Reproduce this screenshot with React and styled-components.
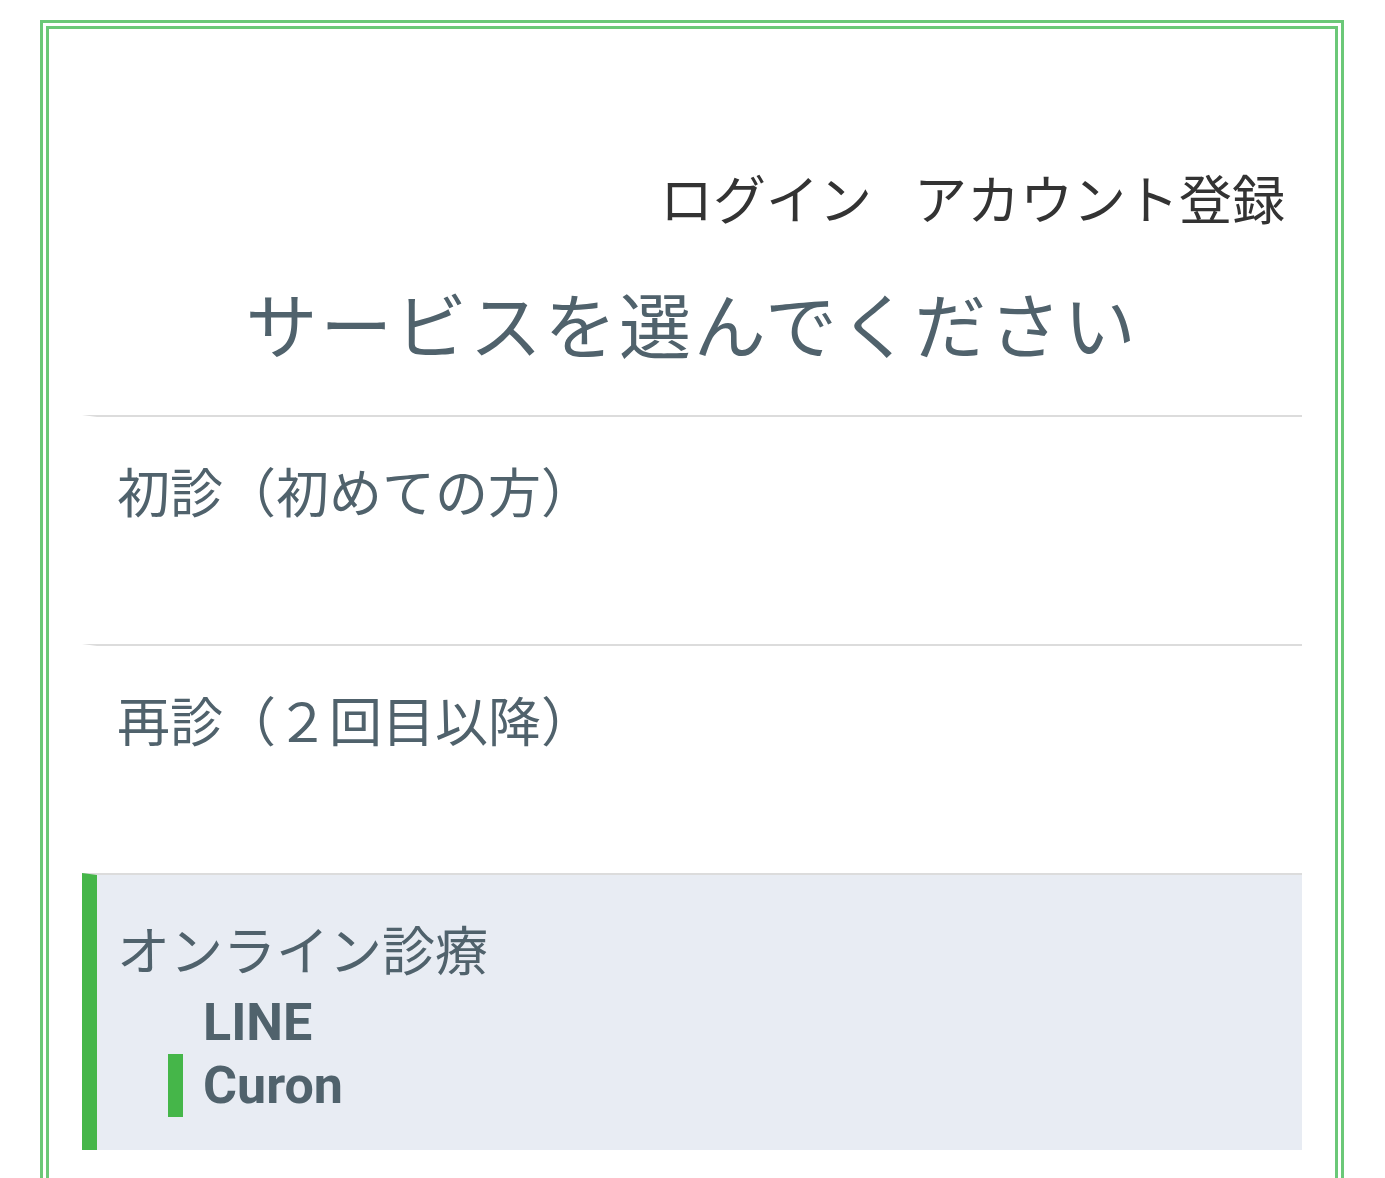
import React from 'react';
import styled, { createGlobalStyle } from 'styled-components';

const GlobalStyle = createGlobalStyle`
  body {
    margin: 0;
    background: #fff;
    font-family: "Noto Sans CJK JP", "Noto Sans", sans-serif;
  }
`;

const Frame = styled.div`
  margin: 20px 41px 0 40px;
  border: 9px double #6bc878;
  padding: 33px 33px 60px;
  min-height: 1200px;
`;

const Nav = styled.nav`
  display: flex;
  justify-content: flex-end;
  gap: 42px;
  padding: 96px 17px 0 0;
`;

const NavLink = styled.a`
  font-size: 53px;
  line-height: 78px;
  color: #333;
  text-decoration: none;
`;

const Title = styled.h1`
  margin: 32px 0 39px;
  text-align: center;
  font-size: 72px;
  line-height: 108px;
  font-weight: 400;
  letter-spacing: 2.7px;
  color: #50626c;
`;

const ServiceList = styled.ul`
  list-style: none;
  margin: 0;
  padding: 0;
`;

const ServiceItem = styled.li`
  border-top: 2px solid #dcdcdc;
  border-left: 15px solid ${(p) => (p.$active ? '#45b649' : 'transparent')};
  background: ${(p) => (p.$active ? '#e8ecf3' : 'transparent')};
  padding: 36px 20px ${(p) => (p.$active ? '33px' : '0')};
  min-height: ${(p) => (p.$active ? 'auto' : '191px')};
`;

const ServiceName = styled.div`
  font-size: 53px;
  line-height: 75px;
  color: #50626c;
`;

const SubList = styled.ul`
  list-style: none;
  margin: 5px 0 0;
  padding: 0 0 0 51px;
`;

const SubItem = styled.li`
  border-left: 15px solid ${(p) => (p.$active ? '#45b649' : 'transparent')};
  padding-left: 20px;
  font-family: Roboto, "Liberation Sans", sans-serif;
  font-weight: 700;
  font-size: 52px;
  line-height: 63px;
  color: #50626c;
`;

export default function App() {
  return (
    <>
      <GlobalStyle />
      <Frame>
        <Nav>
          <NavLink href="#">ログイン</NavLink>
          <NavLink href="#">アカウント登録</NavLink>
        </Nav>
        <Title>サービスを選んでください</Title>
        <ServiceList>
          <ServiceItem>
            <ServiceName>初診（初めての方）</ServiceName>
          </ServiceItem>
          <ServiceItem>
            <ServiceName>再診（２回目以降）</ServiceName>
          </ServiceItem>
          <ServiceItem $active>
            <ServiceName>オンライン診療</ServiceName>
            <SubList>
              <SubItem>LINE</SubItem>
              <SubItem $active>Curon</SubItem>
            </SubList>
          </ServiceItem>
        </ServiceList>
      </Frame>
    </>
  );
}
